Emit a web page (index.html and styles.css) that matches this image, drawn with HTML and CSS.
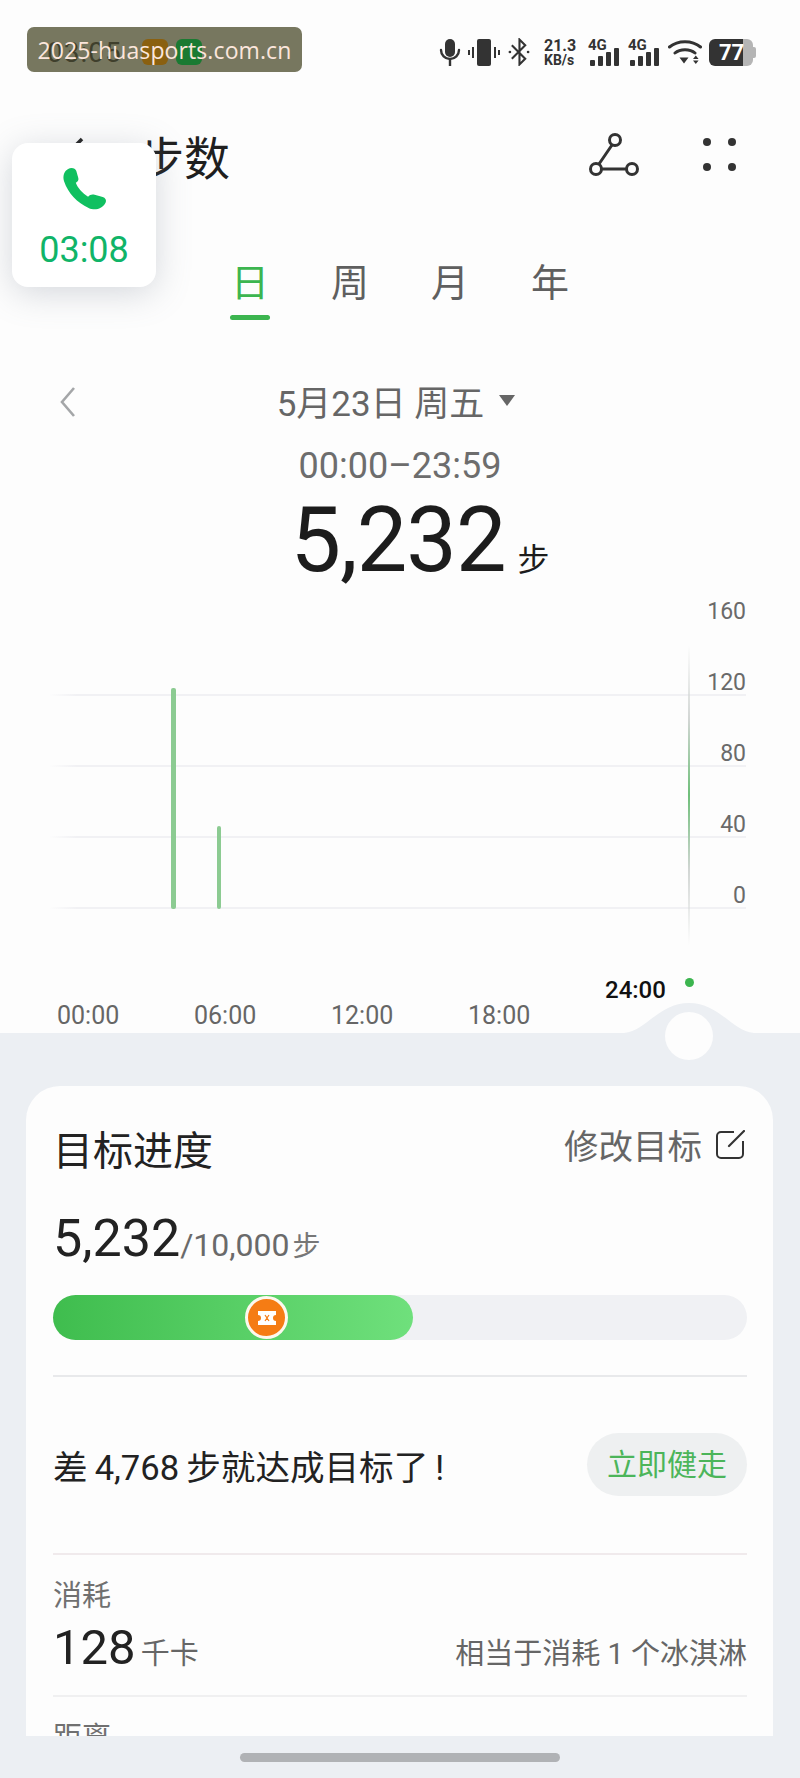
FILE: index.html
```html
<!DOCTYPE html>
<html>

<head>
    <meta charset="utf-8">
    <title>步数</title>
    <link rel="stylesheet" href="styles.css">
</head>

<body>

    <div class="phone">

        <div class="watermark"><span>2025-huasports.com.cn</span></div>

        <div class="call-card">
            <svg class="call-icon" viewBox="0 0 44 44">
                <path d="M6 2C9 0 13 1 14 4L16 11C16.5 13 15 14.5 13.5 15.5C15 20 20 26 25.5 29C27 27.5 29 26.5 31 27L39 29C43 30 44 33 42 36C39 41 32 43 26 40C15 35 6 26 2 14C.5 9 2 4 6 2Z" />
            </svg>
            <div class="call-time">03:08</div>
        </div>

        <section class="top">

            <div class="status">
                <div class="status-left">
                    <span class="clock">03:05</span>
                    <i class="app-dot orange"></i>
                    <i class="app-dot green"></i>
                </div>
                <div class="status-right">
                    <svg class="st-mic" viewBox="0 0 22 27">
                        <rect x="6" y="0" width="10" height="18" rx="5" />
                        <path d="M2 11a9 9 0 0 0 18 0M11 20v7" fill="none" stroke="#333" stroke-width="2.4" stroke-linecap="round" />
                    </svg>
                    <svg class="st-vib" viewBox="0 0 32 27">
                        <rect x="9" y="0" width="14" height="27" rx="2" />
                        <path d="M5 8v11M1 11v5M27 8v11M31 11v5" stroke="#333" stroke-width="2" />
                    </svg>
                    <svg class="st-bt" viewBox="0 0 23 28">
                        <path d="M4 7l14 14-6 6V1l6 6L4 21" fill="none" stroke="#333" stroke-width="2.2" />
                        <circle cx="2" cy="14" r="1.4" />
                        <circle cx="21" cy="14" r="1.4" />
                    </svg>
                    <div class="st-speed"><b>21.3</b><b>KB/s</b></div>
                    <div class="st-signal">
                        <b>4G</b>
                        <div class="bars"><i class="b1"></i><i class="b2"></i><i class="b3"></i><i class="b4"></i></div>
                    </div>
                    <div class="st-signal">
                        <b>4G</b>
                        <div class="bars"><i class="b1"></i><i class="b2"></i><i class="b3"></i><i class="b4"></i></div>
                    </div>
                    <svg class="st-wifi" viewBox="0 0 34 26">
                        <path d="M1.5 8C10 1 24 1 32.500 8M7 14C12 9.500 22 9.500 27 14" fill="none" stroke="#333" stroke-width="3" stroke-linecap="round" />
                        <path d="M11.500 18.500h9l-4.500 6zM25 20l2.800-3.500 2.800 3.500zM25 21.500h5.600l-2.800 3.500z" />
                    </svg>
                    <div class="st-battery"><span class="level">77</span><i class="nub"></i></div>
                </div>
            </div>

            <header class="title-bar">
                <div class="title-left">
                    <svg class="back" viewBox="0 0 24 36">
                        <path d="M20 2L4 18l16 16" fill="none" stroke="#222" stroke-width="3.500" />
                    </svg>
                    <h1>步数</h1>
                </div>
                <div class="title-right">
                    <svg class="route" viewBox="0 0 50 44">
                        <circle cx="26" cy="7" r="5.500" />
                        <circle cx="7" cy="36" r="5.500" />
                        <circle cx="43" cy="36" r="5.500" />
                        <path d="M23 12L10 31M13 36h24" />
                    </svg>
                    <div class="dots"><i></i><i></i><i></i><i></i></div>
                </div>
            </header>

            <nav class="tabs">
                <a class="tab active">日</a>
                <a class="tab">周</a>
                <a class="tab">月</a>
                <a class="tab">年</a>
            </nav>

            <div class="date-row">
                <svg class="prev" viewBox="0 0 16 30">
                    <path d="M14 1L2 15l12 14" fill="none" stroke="#a4a6a8" stroke-width="2.600" />
                </svg>
                <span class="date">5月23日 周五</span><i class="caret"></i>
            </div>
            <div class="range">00:00–23:59</div>
            <div class="total"><span class="total-num">5,232</span><span class="total-unit">步</span></div>

            <div class="chart">
                <div class="row first"><span>160</span></div>
                <div class="row"><span>120</span></div>
                <div class="row"><span>80</span></div>
                <div class="row"><span>40</span></div>
                <div class="row"><span>0</span></div>
                <i class="bar" style="left:171px;width:5px;height:221px"></i>
                <i class="bar" style="left:217px;width:4px;height:83px"></i>
                <i class="cursor"></i>
            </div>

            <div class="x-axis">
                <span>00:00</span>
                <span>06:00</span>
                <span>12:00</span>
                <span>18:00</span>
            </div>
            <div class="now-label">24:00</div>
            <i class="now-dot"></i>
            <svg class="handle" viewBox="0 0 130 70">
                <path d="M0 30C22 28 35 0 65 0S108 28 130 30V70H0Z" fill="#eceff3" />
                <circle cx="65" cy="33" r="24" fill="#fdfdfd" />
            </svg>
        </section>

        <section class="lower">
            <div class="card">

                <div class="goal-head">
                    <h2>目标进度</h2>
                    <a class="edit">修改目标
                        <svg class="edit-icon" viewBox="0 0 30 30">
                            <path d="M19 2H6a4 4 0 0 0-4 4v18a4 4 0 0 0 4 4h18a4 4 0 0 0 4-4V11" fill="none" stroke="#333" stroke-width="2" />
                            <path d="M14 16L29 1" stroke="#333" stroke-width="2.200" stroke-linecap="round" />
                        </svg>
                    </a>
                </div>

                <div class="goal-count">
                    <span class="count">5,232</span><span class="target">/10,000</span><span class="target-unit">步</span>
                </div>

                <div class="progress">
                    <div class="progress-fill" style="width:360px"></div>
                    <div class="knob">
                        <svg viewBox="0 0 20 16">
                            <path d="M1 1h18v4a3 3 0 0 0 0 6v4H1v-4a3 3 0 0 0 0-6z" fill="#fff" />
                            <path d="M8 5l2 3-2 3M12 5l-2 3 2 3" fill="none" stroke="#f57c14" stroke-width="1.200" />
                        </svg>
                    </div>
                </div>

                <div class="remain">
                    <span class="remain-text">差&thinsp;4,768&thinsp;步就达成目标了&thinsp;!</span>
                    <a class="walk-btn">立即健走</a>
                </div>

                <div class="stat">
                    <div class="stat-label">消耗</div>
                    <div class="stat-line">
                        <span><span class="stat-num">128</span><span class="stat-unit">千卡</span></span>
                        <span class="stat-note">相当于消耗 1 个冰淇淋</span>
                    </div>
                </div>

                <div class="stat last">
                    <div class="stat-label">距离</div>
                </div>

            </div>
            <div class="home-bar"></div>
        </section>

    </div>

</body>

</html>
```

FILE: styles.css
```css
* {
    box-sizing: border-box;
}

body {
    margin: 0;
    padding: 0;
    background-color: #eceff3;
    font-family: Roboto, "Noto Sans CJK SC", sans-serif;
    overflow: hidden;
}

i {
    display: block;
}

.phone {
    width: 800px;
    height: 1778px;
    position: relative;
    overflow: hidden;
}

/* floating bits */

.watermark {
    position: absolute;
    left: 27px;
    top: 27px;
    width: 275px;
    height: 45px;
    display: flex;
    align-items: center;
    justify-content: center;
    color: #fbe6dc;
    font-size: 23px;
    letter-spacing: 0.1px;
    font-family: "Open Sans", sans-serif;
}

.watermark::before {
    content: "";
    position: absolute;
    left: 0;
    top: 0;
    width: 100%;
    height: 100%;
    background-color: #77775f;
    border-radius: 7px;
    z-index: 1;
}

.watermark span {
    position: relative;
    z-index: 3;
}

.call-card {
    position: absolute;
    left: 12px;
    top: 143px;
    width: 144px;
    height: 144px;
    background-color: #fff;
    border-radius: 16px;
    box-shadow: 0 6px 34px rgba(120, 130, 145, 0.3);
    display: flex;
    flex-direction: column;
    align-items: center;
    z-index: 5;
}

.call-icon {
    width: 45px;
    height: 45px;
    margin-top: 24px;
    fill: #10c060;
}

.call-time {
    margin-top: 18px;
    font-size: 36px;
    line-height: 40px;
    color: #10b468;
}

/* top white part */

.top {
    height: 1033px;
    background-color: #fdfdfd;
    position: relative;
}

.status {
    display: flex;
    justify-content: space-between;
    padding: 38px 44px 0 47px;
    height: 66px;
}

.status-left {
    display: flex;
    align-items: center;
    position: relative;
    z-index: 2;
}

.clock {
    width: 95px;
    font-size: 28px;
    color: #3f3f2c;
    letter-spacing: 1px;
}

.app-dot {
    width: 26px;
    height: 26px;
    border-radius: 6px;
    margin-right: 8px;
}

.app-dot.orange {
    background-color: #8a6010;
}

.app-dot.green {
    background-color: #1a7a32;
}

.status-right {
    display: flex;
    align-items: center;
    fill: #333;
}

.st-mic {
    width: 22px;
    height: 27px;
    margin-right: 7px;
}

.st-vib {
    width: 32px;
    height: 27px;
    margin-right: 8px;
}

.st-bt {
    width: 22px;
    height: 28px;
    margin-right: 14px;
}

.st-speed {
    display: flex;
    flex-direction: column;
    width: 31px;
    font-size: 14px;
    line-height: 14px;
    color: #333;
    margin-right: 13px;
    white-space: nowrap;
}

.st-speed b:first-child {
    font-size: 16px;
    line-height: 15px;
}

.st-signal {
    width: 32px;
    height: 28px;
    position: relative;
    font-size: 15px;
    line-height: 14px;
    color: #333;
    margin-right: 8px;
}

.st-signal b {
    display: block;
}

.bars {
    position: absolute;
    left: 2px;
    bottom: 0;
    display: flex;
    align-items: flex-end;
    gap: 3px;
}

.bars i {
    width: 5px;
    background-color: #333;
    border-radius: 1px;
}

.b1 {
    height: 6px;
}

.b2 {
    height: 10px;
}

.b3 {
    height: 14px;
}

.b4 {
    height: 18px;
}

.st-wifi {
    width: 34px;
    height: 26px;
    margin-right: 7px;
}

.st-battery {
    width: 44px;
    height: 27px;
    margin-right: 3px;
    border-radius: 6px;
    background: linear-gradient(to right, #333 0, #333 34px, #b5b5b5 34px);
    color: #fff;
    font-size: 22px;
    font-weight: 700;
    line-height: 27px;
    padding-left: 10px;
    position: relative;
}

.nub {
    position: absolute;
    right: -3px;
    top: 8px;
    width: 3px;
    height: 11px;
    border-radius: 0 2px 2px 0;
    background-color: #b5b5b5;
}

.title-bar {
    display: flex;
    justify-content: space-between;
    align-items: center;
    margin-top: 59px;
    height: 60px;
    padding: 0 64px 0 62px;
}

.title-left {
    display: flex;
    align-items: center;
}

.back {
    width: 24px;
    height: 36px;
}

h1 {
    margin: 0 0 0 52px;
    font-size: 46px;
    font-weight: 400;
    color: #1f1f1f;
}

.title-right {
    display: flex;
    align-items: center;
    gap: 64px;
}

.route {
    width: 50px;
    height: 44px;
    fill: none;
    stroke: #333;
    stroke-width: 3;
}

.dots {
    display: grid;
    grid-template-columns: 8px 8px;
    gap: 17px;
    margin-top: -1px;
}

.dots i {
    width: 8px;
    height: 8px;
    border-radius: 50%;
    background-color: #333;
}

.tabs {
    display: flex;
    justify-content: center;
    gap: 62px;
    margin-top: 78px;
    height: 57px;
}

.tab {
    width: 38px;
    font-size: 38px;
    line-height: 40px;
    color: #5f5f5f;
    text-align: center;
    position: relative;
}

.tab.active {
    color: #3cb54f;
}

.tab.active::after {
    content: "";
    position: absolute;
    left: -1px;
    bottom: 0;
    width: 40px;
    height: 5px;
    border-radius: 3px;
    background-color: #3cb54f;
}

.date-row {
    display: flex;
    align-items: center;
    justify-content: center;
    height: 40px;
    margin-top: 60px;
    padding-right: 8px;
    position: relative;
    color: #666;
    font-size: 35px;
}

.prev {
    position: absolute;
    left: 60px;
    top: 7px;
    width: 16px;
    height: 30px;
}

.caret {
    width: 0;
    height: 0;
    margin-left: 15px;
    border-left: 8px solid transparent;
    border-right: 8px solid transparent;
    border-top: 11px solid #666;
}

.range {
    margin-top: 26px;
    height: 40px;
    line-height: 40px;
    text-align: center;
    color: #6d6d6d;
    font-size: 36px;
}

.total {
    margin-top: 15px;
    height: 76px;
    display: flex;
    justify-content: center;
    align-items: baseline;
    color: #1c1c1c;
    padding-left: 40px;
}

.total-num {
    font-size: 90px;
    line-height: 80px;
    letter-spacing: -1px;
}

.total-unit {
    font-size: 32px;
    margin-left: 12px;
}

/* chart */

.chart {
    position: relative;
    padding: 0 54px 0 50px;
}

.row {
    height: 71px;
    border-bottom: 2px solid #f1f1f4;
    border-image: linear-gradient(to right, rgba(241, 241, 244, 0), #f1f1f4 4%) 1;
    display: flex;
    justify-content: flex-end;
    align-items: flex-end;
    color: #6a6a6a;
    font-size: 23px;
    line-height: 22px;
}

.row.first {
    height: 48px;
    border-bottom: 0;
    line-height: 26px;
}

.bar {
    position: absolute;
    bottom: 0;
    border-radius: 2px;
    background-color: #8ccb92;
}

.cursor {
    position: absolute;
    left: 688px;
    top: 68px;
    width: 2px;
    height: 300px;
    background: linear-gradient(to bottom, rgba(200, 205, 205, 0), #d2d6d4 25%, #6fbf7a 50%, #d2d6d4 75%, rgba(200, 205, 205, 0));
}

.x-axis {
    display: flex;
    margin-top: 93px;
    padding-left: 57px;
    color: #666;
    font-size: 25px;
    line-height: 28px;
}

.x-axis span {
    width: 137px;
}

.now-label {
    position: absolute;
    left: 605px;
    top: 976px;
    font-size: 24px;
    font-weight: 500;
    line-height: 28px;
    color: #111;
}

.now-dot {
    position: absolute;
    left: 685px;
    top: 978px;
    width: 9px;
    height: 9px;
    border-radius: 50%;
    background-color: #3cb54f;
}

.handle {
    position: absolute;
    left: 624px;
    top: 1003px;
    width: 130px;
    height: 70px;
    z-index: 2;
}

/* lower grey part */

.lower {
    height: 745px;
    padding: 53px 27px 0 26px;
    background-color: #eceff3;
}

.card {
    height: 650px;
    overflow: hidden;
    background-color: #fdfdfd;
    border-radius: 34px 34px 0 0;
    padding: 0 26px 0 27px;
}

.goal-head {
    display: flex;
    justify-content: space-between;
    align-items: center;
    padding-top: 31px;
    height: 92px;
}

h2 {
    margin: 0;
    font-size: 40px;
    font-weight: 400;
    color: #222;
}

.edit {
    display: flex;
    align-items: center;
    gap: 13px;
    font-size: 34.500px;
    color: #666;
    margin-top: -8px;
    margin-right: 2px;
}

.edit-icon {
    width: 30px;
    height: 30px;
    margin-top: 2px;
}

.goal-count {
    display: flex;
    align-items: baseline;
    margin-top: 30px;
    height: 60px;
}

.count {
    font-size: 52px;
    color: #222;
}

.target {
    font-size: 32px;
    color: #6a6a6a;
}

.target-unit {
    font-size: 28px;
    color: #777;
    margin-left: 3px;
}

.progress {
    margin-top: 27px;
    height: 45px;
    border-radius: 23px;
    background-color: #f0f1f4;
    position: relative;
}

.progress-fill {
    height: 100%;
    border-radius: 23px;
    background: linear-gradient(to right, #3fbd4e, #6fe07c);
}

.knob {
    position: absolute;
    left: 192px;
    top: 1px;
    width: 43px;
    height: 43px;
    border-radius: 50%;
    background-color: #f57c14;
    border: 3px solid #fdf8ee;
    display: flex;
    align-items: center;
    justify-content: center;
}

.knob svg {
    width: 20px;
    height: 16px;
}

.remain {
    margin-top: 35px;
    border-top: 2px solid #e8e9eb;
    border-bottom: 2px solid #f0eaec;
    height: 180px;
    display: flex;
    justify-content: space-between;
    align-items: center;
    padding-bottom: 1px;
}

.remain-text {
    font-size: 34.600px;
    color: #222;
}

.walk-btn {
    width: 160px;
    height: 63px;
    border-radius: 32px;
    background-color: #eef0f1;
    color: #4cb55a;
    font-size: 30px;
    line-height: 63px;
    text-align: center;
}

.stat {
    border-bottom: 2px solid #f0f0f1;
    height: 142px;
    padding-top: 22px;
}

.stat.last {
    border-bottom: 0;
}

.stat-label {
    font-size: 29px;
    line-height: 38px;
    color: #707070;
}

.stat-line {
    display: flex;
    justify-content: space-between;
    align-items: baseline;
    margin-top: 4px;
}

.stat-num {
    font-size: 49px;
    color: #222;
}

.stat-unit {
    font-size: 29px;
    color: #666;
    margin-left: 5px;
}

.stat-note {
    font-size: 29px;
    color: #666;
}

.home-bar {
    width: 320px;
    height: 9px;
    margin: 17px auto 0;
    border-radius: 5px;
    background-color: #b0b2b5;
}
```
